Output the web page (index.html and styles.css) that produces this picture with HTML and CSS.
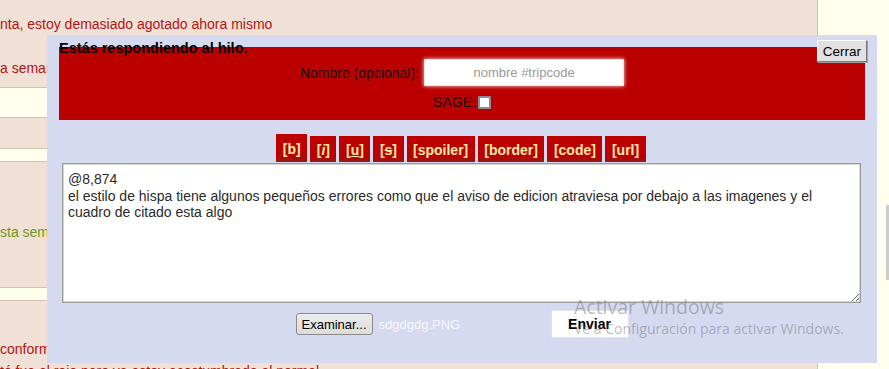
FILE: index.html
```html
<!DOCTYPE html>
<html lang="es">
<head>
    <meta charset="UTF-8">
    <meta name="viewport" content="width=device-width, initial-scale=1.0">
    <title>Responder al hilo</title>
    <link rel="stylesheet" href="styles.css">
</head>
<body>
    <div class="page">
        <div class="thread">
            <p class="msg first">nta, estoy demasiado agotado ahora mismo</p>
            <p class="msg second">a semana no pude entrar mucho</p>
            <div class="strip tall"></div>
            <div class="strip gap1"></div>
            <p class="msg quote">sta semana fue bastante larga</p>
            <div class="strip gap2"></div>
            <p class="msg conform">conforme pasa el tiempo</p>
            <p class="msg last">tó fue el rojo pero ya estoy acostumbrado al normal</p>
        </div>
        <div class="side">
            <div class="scroll-thumb"></div>
        </div>
    </div>

    <form class="qr">
        <button type="button" class="close-btn">Cerrar</button>
        <div class="qr-head">
            <h3 class="qr-title">Estás respondiendo al hilo.</h3>
            <div class="name-row">
                <label for="name">Nombre (opcional):</label>
                <input type="text" id="name" placeholder="nombre #tripcode">
            </div>
            <div class="sage-row">
                <label for="sage">SAGE:</label>
                <input type="checkbox" id="sage">
            </div>
        </div>

        <div class="fmt-bar">
            <span class="fmt active">[b]</span>
            <span class="fmt">[<i>i</i>]</span>
            <span class="fmt">[<u>u</u>]</span>
            <span class="fmt">[<s>s</s>]</span>
            <span class="fmt">[spoiler]</span>
            <span class="fmt">[border]</span>
            <span class="fmt">[code]</span>
            <span class="fmt">[url]</span>
        </div>

        <textarea class="body-text">@8,874
el estilo de hispa tiene algunos pequeños errores como que el aviso de edicion atraviesa por debajo a las imagenes y el cuadro de citado esta algo</textarea>

        <div class="send-row">
            <div class="file-pick">
                <button type="button" class="browse-btn">Examinar...</button>
                <span class="file-name">sdgdgdg.PNG</span>
            </div>
            <button type="button" class="send-btn">Enviar</button>
        </div>
    </form>

    <div class="activate">
        <div class="activate-big">Activar Windows</div>
        <div class="activate-small">Ve a Configuración para activar Windows.</div>
    </div>
</body>
</html>
```

FILE: styles.css
```css
body {
    margin: 0;
    font-family: "Liberation Sans", Arial, sans-serif;
    font-size: 14px;
    overflow: hidden;
}
.page {
    display: flex;
    height: 369px;
}
.thread {
    width: 817px;
    background-color: #f0e0d6;
    border-right: 1px solid #d9bfb7;
    overflow: hidden;
}
.side {
    flex: 1;
    background-color: #ffffee;
    padding-top: 205px;
    display: flex;
    flex-direction: column;
    align-items: flex-end;
}
.scroll-thumb {
    width: 3px;
    height: 75px;
    background-color: #cdcdcd;
}
.msg {
    margin: 0;
    line-height: 16px;
    color: #b01515;
    white-space: nowrap;
}
.msg.first {
    margin-top: 16px;
}
.msg.second {
    margin-top: 28px;
}
.msg.quote {
    margin-top: 62px;
    color: #6b9a22;
}
.msg.conform {
    margin-top: 40px;
}
.msg.last {
    margin-top: 6px;
}
.strip {
    background-color: #ffffee;
    border-top: 1px solid #d9bfb7;
    border-bottom: 1px solid #d9bfb7;
    height: 12px;
}
.strip.tall {
    margin-top: 11px;
    height: 29px;
}
.strip.gap1 {
    margin-top: 30px;
}
.strip.gap2 {
    margin-top: 47px;
}

/* formulario de respuesta rapida */
.qr {
    position: fixed;
    left: 47px;
    top: 35px;
    width: 830px;
    height: 328px;
    box-sizing: border-box;
    padding: 12px;
    background-color: #d6daf0;
    margin: 0;
}
.close-btn {
    position: absolute;
    right: 10px;
    top: 5px;
    width: 50px;
    height: 22px;
    padding: 0;
    font-family: "Liberation Sans", Arial, sans-serif;
    font-size: 13.5px;
    color: #000;
    background-color: #e1e1e1;
    border: 1px solid;
    border-color: #fff #7a7a7a #7a7a7a #fff;
    box-shadow: 1px 1px 0 #a0a0a0;
    z-index: 2;
}
.qr-head {
    position: relative;
    height: 73px;
    background-color: #bb0000;
    display: flex;
    flex-direction: column;
    align-items: center;
}
.qr-title {
    position: absolute;
    left: 0;
    top: -7px;
    margin: 0;
    font-size: 14.5px;
    line-height: 17px;
    font-weight: bold;
    color: #000;
}
.name-row {
    margin-top: 12px;
    display: flex;
    align-items: center;
    gap: 5px;
    color: #111;
}
.name-row input {
    width: 200px;
    height: 27px;
    box-sizing: border-box;
    border: 1px solid #e6e6e6;
    box-shadow: 0 0 4px rgba(255, 255, 255, 0.9);
    text-align: center;
    font-family: "Liberation Sans", Arial, sans-serif;
    font-size: 13px;
    padding: 0 4px;
}
.name-row input::placeholder {
    color: #999;
}
.sage-row {
    margin-top: 8px;
    display: flex;
    align-items: center;
    gap: 2px;
    line-height: 16px;
    color: #111;
}
.sage-row input {
    appearance: none;
    width: 13px;
    height: 13px;
    margin: 0;
    box-sizing: border-box;
    border: 2px solid #8a8c96;
    border-radius: 1px;
    background-color: #fff;
}
.fmt-bar {
    display: flex;
    justify-content: center;
    align-items: flex-end;
    gap: 3px;
    margin-top: 14px;
    padding-right: 2px;
}
.fmt {
    height: 26px;
    box-sizing: border-box;
    padding: 3px 6.5px 0;
    line-height: 23px;
    font-weight: bold;
    color: #fde9a8;
    background: linear-gradient(#bd0000 0%, #bb0000 78%, #8e1d1d 100%);
}
.fmt.active {
    height: 28px;
    padding-top: 4px;
}
.fmt u, .fmt s {
    text-decoration-thickness: 1px;
}
.body-text {
    display: block;
    width: 799px;
    height: 140px;
    box-sizing: border-box;
    margin: 1px 0 0 3px;
    padding: 7px 5px;
    border: 1px solid #9a9c96;
    box-shadow: inset 0 0 0 1px #d4d6d0;
    font-family: "Liberation Sans", Arial, sans-serif;
    font-size: 14px;
    line-height: 16.5px;
    color: #2a2a2a;
    background-color: #fff;
}
.send-row {
    display: flex;
    justify-content: center;
    align-items: center;
    margin-top: 7px;
}
.file-pick {
    width: 255px;
    display: flex;
    align-items: center;
    gap: 6px;
}
.browse-btn {
    width: 77px;
    height: 22px;
    padding: 0;
    font-family: "Liberation Sans", Arial, sans-serif;
    font-size: 13px;
    color: #000;
    background: linear-gradient(#ececec, #dcdcdc);
    border: 1px solid #8a8a8a;
    border-radius: 3px;
}
.file-name {
    font-size: 13px;
    color: #f6f6fb;
}
.send-btn {
    width: 78px;
    height: 28px;
    padding: 0;
    font-family: "Liberation Sans", Arial, sans-serif;
    font-size: 14px;
    font-weight: bold;
    color: #000;
    background-color: #fff;
    border: 1px solid #e2e2e8;
}

/* marca de agua de windows */
.activate {
    position: fixed;
    left: 574px;
    top: 294px;
    color: rgba(105, 105, 115, 0.45);
    font-family: "Open Sans", sans-serif;
    pointer-events: none;
}
.activate-big {
    font-size: 19.5px;
    line-height: 26px;
}
.activate-small {
    font-size: 14px;
    line-height: 18px;
}
```
